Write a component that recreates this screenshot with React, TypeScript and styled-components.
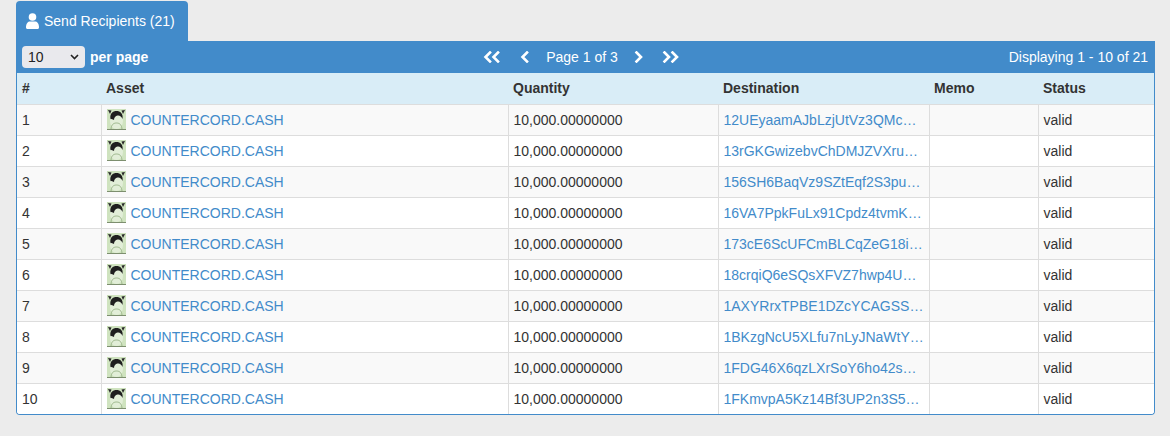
import React from "react";
import styled, { createGlobalStyle } from "styled-components";

const GlobalStyle = createGlobalStyle`
  html, body { margin: 0; padding: 0; background: #ececec; }
  body { font-family: "Liberation Sans", Arial, Helvetica, sans-serif; font-size: 14px; color: #333; }
`;

const Page = styled.div`
  padding: 1px 15px 21px 16px;
  width: 1139px;
`;

const Tab = styled.div`
  display: inline-flex;
  align-items: center;
  gap: 5px;
  height: 40px;
  padding: 0 13px 0 10px;
  box-sizing: border-box;
  background: #428bca;
  color: #fff;
  border-radius: 4px 4px 0 0;
  font-size: 14px;
  white-space: nowrap;
`;

const Panel = styled.div`
  border: 1px solid #428bca;
  border-top: none;
  border-radius: 0 0 4px 4px;
  background: #fff;
  overflow: hidden;
`;

const Toolbar = styled.div`
  display: grid;
  grid-template-columns: 1fr auto 1fr;
  align-items: center;
  height: 32px;
  padding: 0 6px 0 5px;
  background: #428bca;
  color: #fff;
`;

const PerPage = styled.div`
  display: flex;
  align-items: center;
  gap: 5px;
  font-weight: bold;
`;

const SelectWrap = styled.span`
  position: relative;
  display: inline-block;
  width: 63px;
  height: 22px;
`;

const Select = styled.select`
  appearance: none;
  width: 100%;
  height: 100%;
  border: none;
  border-radius: 4px;
  background: #e9e9ed;
  color: #222;
  font-family: "Liberation Sans", Arial, sans-serif;
  font-size: 14px;
  padding: 0 0 0 6px;
  outline: none;
`;

const SelectArrow = styled.svg`
  position: absolute;
  right: 6px;
  top: 8px;
  pointer-events: none;
`;

const Pager = styled.div`
  display: flex;
  align-items: center;
  margin-left: -7px;
`;

const PageBtn = styled.span<{ $w: number; $ml?: number }>`
  display: inline-flex;
  align-items: center;
  justify-content: center;
  width: ${(p) => p.$w}px;
  margin-left: ${(p) => p.$ml ?? 0}px;
`;

const PageLabel = styled.span`
  margin: 0 16px 0 17px;
`;

const Displaying = styled.div`
  justify-self: end;
  white-space: nowrap;
`;

const Table = styled.table`
  width: 100%;
  border-collapse: collapse;
  table-layout: fixed;
`;

const Th = styled.th<{ $w: number }>`
  width: ${(p) => p.$w}px;
  height: 31px;
  text-align: left;
  font-weight: bold;
  padding: 0 5px;
  background: #d9edf7;
  border-bottom: 1px solid #ddd;
  box-sizing: border-box;
`;

const Tr = styled.tr<{ $odd: boolean }>`
  background: ${(p) => (p.$odd ? "#f9f9f9" : "#fff")};
`;

const Td = styled.td`
  height: 31px;
  padding: 0 5px;
  border-top: 1px solid #ddd;
  border-left: 1px solid #ddd;
  box-sizing: border-box;
  white-space: nowrap;
  &:first-child { border-left: none; }
`;

const Link = styled.a`
  color: #428bca;
  text-decoration: none;
`;

const AssetCell = styled.span`
  display: inline-flex;
  align-items: center;
  gap: 5px;
  vertical-align: middle;
`;

const UserIcon = () => (
  <svg width="13" height="16" viewBox="0 0 13 16">
    <circle cx="6.5" cy="4" r="3.8" fill="#fff" />
    <path d="M0 14.5 C0 10.5 2 8.6 4 8.6 L9 8.6 C11 8.6 13 10.5 13 14.5 C13 15.4 12.4 16 11.5 16 L1.5 16 C0.6 16 0 15.4 0 14.5 Z" fill="#fff" />
  </svg>
);

const Chev = ({ dir, double }: { dir: "l" | "r"; double?: boolean }) => {
  const one = (x: number) =>
    dir === "l"
      ? `M${x + 6} 1.5 L${x + 1.5} 6 L${x + 6} 10.5`
      : `M${x + 1.5} 1.5 L${x + 6} 6 L${x + 1.5} 10.5`;
  return (
    <svg width={double ? 18 : 9} height="12" viewBox={`0 0 ${double ? 18 : 9} 12`}>
      <path d={one(1)} stroke="#fff" strokeWidth="2.6" fill="none" strokeLinecap="square" />
      {double && <path d={one(9)} stroke="#fff" strokeWidth="2.6" fill="none" strokeLinecap="square" />}
    </svg>
  );
};

const AssetIcon = () => (
  <svg width="19" height="21" viewBox="0 0 19 21">
    <rect x="0" y="0" width="19" height="21" fill="#c6dcb4" />
    <path d="M2 0 L17 0 L19 3 L19 21 L0 21 L0 3 Z" fill="#cfe3bf" />
    <ellipse cx="9.5" cy="12" rx="6.5" ry="8" fill="#e2eed8" />
    <path d="M3.5 10 C2.5 4.5 6 2 9.5 2 C13 2 16.5 4.5 15.5 10 C14.5 7.5 12.5 6 10.5 6.5 C8.5 7 7 8.5 7 11 C5.5 10 4.5 10.5 3.5 10 Z" fill="#1f1f1f" />
    <path d="M1 1 L4.5 1.5 L3 5 Z" fill="#2a2a2a" />
    <path d="M18 1 L14.5 1.5 L16 5 Z" fill="#2a2a2a" />
    <path d="M4 20 C4.5 16 6 14 9.5 14 C13 14 14.5 16 15 20" stroke="#9bb58a" strokeWidth="1" fill="none" />
    <path d="M0 20.5 L19 20.5" stroke="#7d8f6f" strokeWidth="1" />
  </svg>
);

const destinations = [
  "12UEyaamAJbLzjUtVz3QMc…",
  "13rGKGwizebvChDMJZVXru…",
  "156SH6BaqVz9SZtEqf2S3pu…",
  "16VA7PpkFuLx91Cpdz4tvmK…",
  "173cE6ScUFCmBLCqZeG18i…",
  "18crqiQ6eSQsXFVZ7hwp4U…",
  "1AXYRrxTPBE1DZcYCAGSS…",
  "1BKzgNcU5XLfu7nLyJNaWtY…",
  "1FDG46X6qzLXrSoY6ho42s…",
  "1FKmvpA5Kz14Bf3UP2n3S5…",
];

const cols = [
  { label: "#", w: 84 },
  { label: "Asset", w: 407 },
  { label: "Quantity", w: 210 },
  { label: "Destination", w: 211 },
  { label: "Memo", w: 109 },
  { label: "Status", w: 116 },
];

export default function App() {
  return (
    <>
      <GlobalStyle />
      <Page>
        <Tab>
          <UserIcon />
          <span>Send Recipients (21)</span>
        </Tab>
        <Panel>
          <Toolbar>
            <PerPage>
              <SelectWrap>
                <Select defaultValue="10">
                  <option value="10">10</option>
                  <option value="25">25</option>
                  <option value="50">50</option>
                </Select>
                <SelectArrow width="9" height="6" viewBox="0 0 9 6">
                  <path d="M1 1 L4.5 4.5 L8 1" stroke="#222" strokeWidth="1.6" fill="none" />
                </SelectArrow>
              </SelectWrap>
              <span>per page</span>
            </PerPage>
            <Pager>
              <PageBtn $w={18}><Chev dir="l" double /></PageBtn>
              <PageBtn $w={9} $ml={19}><Chev dir="l" /></PageBtn>
              <PageLabel>Page 1 of 3</PageLabel>
              <PageBtn $w={9}><Chev dir="r" /></PageBtn>
              <PageBtn $w={18} $ml={19}><Chev dir="r" double /></PageBtn>
            </Pager>
            <Displaying>Displaying 1 - 10 of 21</Displaying>
          </Toolbar>
          <Table>
            <thead>
              <tr>
                {cols.map((c) => (
                  <Th key={c.label} $w={c.w}>{c.label}</Th>
                ))}
              </tr>
            </thead>
            <tbody>
              {destinations.map((d, i) => (
                <Tr key={d} $odd={i % 2 === 0}>
                  <Td>{i + 1}</Td>
                  <Td>
                    <AssetCell>
                      <AssetIcon />
                      <Link href="#">COUNTERCORD.CASH</Link>
                    </AssetCell>
                  </Td>
                  <Td>10,000.00000000</Td>
                  <Td>
                    <Link href="#">{d}</Link>
                  </Td>
                  <Td></Td>
                  <Td>valid</Td>
                </Tr>
              ))}
            </tbody>
          </Table>
        </Panel>
      </Page>
    </>
  );
}
